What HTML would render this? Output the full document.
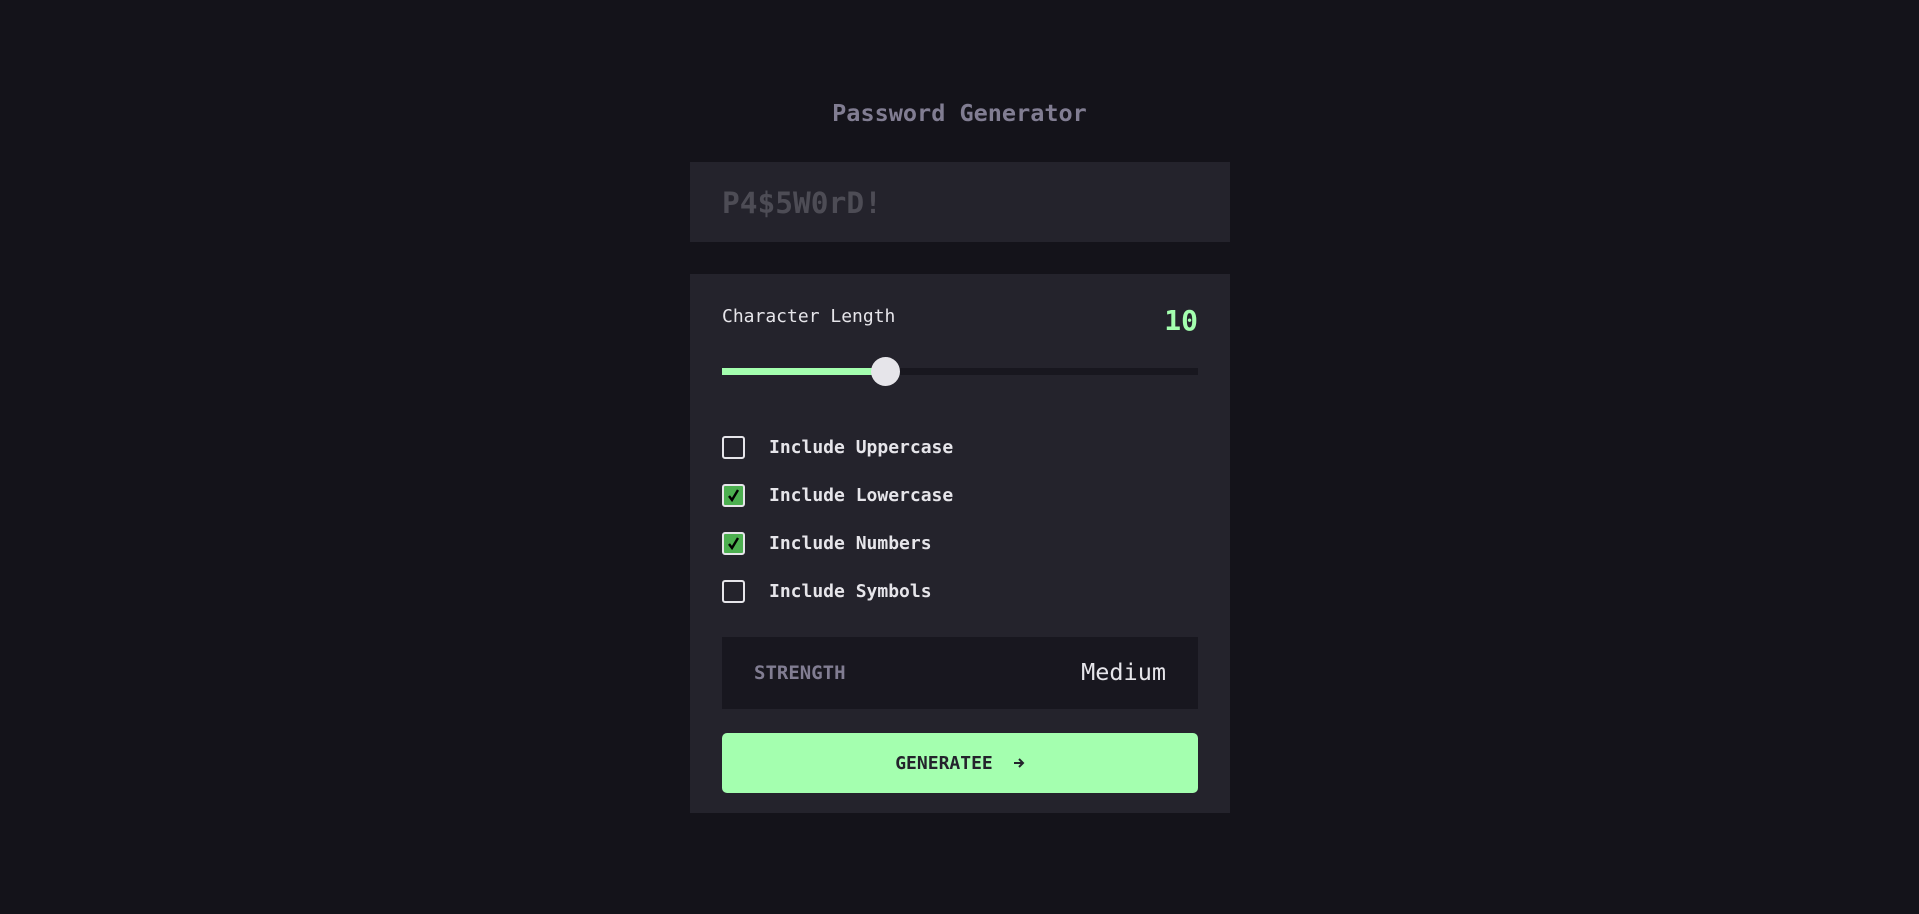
<!DOCTYPE html>
<html><head><style>
*{margin:0;padding:0;box-sizing:border-box}
body{width:1919px;height:914px;background:#14131a;font-family:"DejaVu Sans Mono","Liberation Mono",monospace;position:relative;overflow:hidden}
.t{position:absolute;left:0;width:1919px;top:99px;text-align:center;color:#817d92;font-size:23.5px;font-weight:bold}
.pw{position:absolute;left:690px;top:162px;width:540px;height:80px;background:#24232c}
.pw span{position:absolute;left:32px;top:24px;font-size:29.5px;font-weight:bold;color:#4d4c55}
.card{position:absolute;left:690px;top:274px;width:540px;height:539px;background:#24232c}
.cl{position:absolute;left:32px;top:32px;color:#e6e5ea;font-size:18px}
.num{position:absolute;right:32px;top:30px;color:#a4ffaf;font-size:28px;font-weight:bold}
.track{position:absolute;left:32px;top:94px;width:476px;height:7px;background:#18171f}
.fill{position:absolute;left:0;top:0;width:163px;height:7px;background:#a4ffaf}
.thumb{position:absolute;left:149px;top:-11px;width:29px;height:29px;border-radius:50%;background:#e6e5ea}
.row{position:absolute;left:32px;height:24px;display:flex;align-items:center;color:#e6e5ea;font-size:18px;font-weight:bold}
.cb{width:23px;height:23px;border:2px solid #e6e5ea;border-radius:3px;margin-right:24px;position:relative;flex:none}
.cb.on{background:#4caf50}
.cb svg{position:absolute;left:3px;top:3px}
.str{position:absolute;left:32px;top:363px;width:476px;height:72px;background:#18171f}
.str .a{position:absolute;left:32px;top:25px;color:#817d92;font-size:19px;font-weight:bold}
.str .b{position:absolute;right:32px;top:21px;color:#e6e5ea;font-size:23.5px}
.btn{position:absolute;left:32px;top:459px;width:476px;height:60px;background:#a4ffaf;border-radius:5px;display:flex;align-items:center;justify-content:center;color:#24232c;font-size:18px;font-weight:bold}
.btn svg{margin-left:20px}
</style></head><body>
<div class="t">Password Generator</div>
<div class="pw"><span>P4$5W0rD!</span></div>
<div class="card">
<div class="cl">Character Length</div>
<div class="num">10</div>
<div class="track"><div class="fill"></div><div class="thumb"></div></div>
<div class="row" style="top:161px"><div class="cb"></div>Include Uppercase</div>
<div class="row" style="top:209px"><div class="cb on"><svg width="13" height="13" viewBox="0 0 13 13"><path d="M2 7 L5 11 L11 1" stroke="#000" stroke-width="2.4" fill="none"/></svg></div>Include Lowercase</div>
<div class="row" style="top:257px"><div class="cb on"><svg width="13" height="13" viewBox="0 0 13 13"><path d="M2 7 L5 11 L11 1" stroke="#000" stroke-width="2.4" fill="none"/></svg></div>Include Numbers</div>
<div class="row" style="top:305px"><div class="cb"></div>Include Symbols</div>
<div class="str"><span class="a">STRENGTH</span><span class="b">Medium</span></div>
<div class="btn">GENERATEE<svg width="12" height="12" viewBox="0 0 12 12"><path d="M1 6 H10 M6 2 L10 6 L6 10" stroke="#24232c" stroke-width="2" fill="none"/></svg></div>
</div>
</body></html>
